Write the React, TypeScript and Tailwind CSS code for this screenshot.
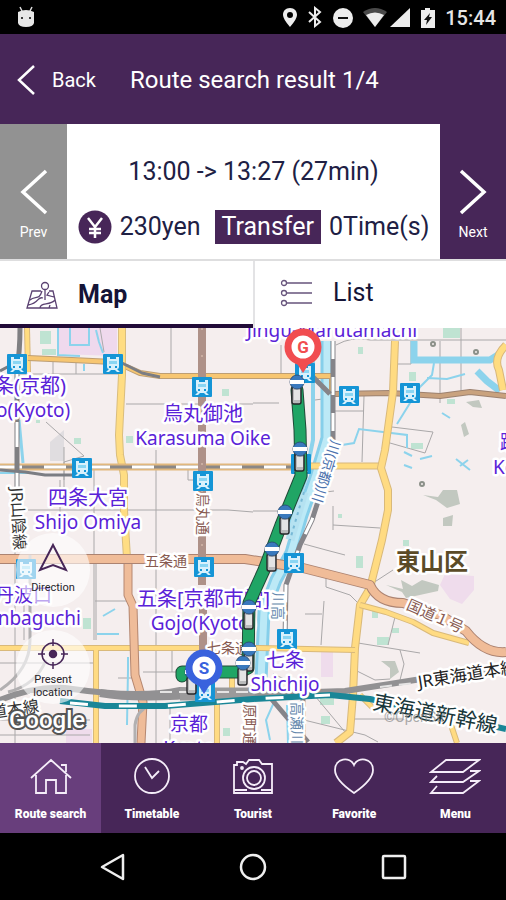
import React from "react";

const font = "font-[Roboto,'Noto_Sans',sans-serif]";

type P = { d: string; w: number; c: string; dash?: string; o?: number };

function Line({ d, w, c, dash, o }: P) {
  return (
    <path d={d} fill="none" stroke={c} strokeWidth={w} strokeDasharray={dash} opacity={o} strokeLinejoin="round" />
  );
}

function Road({ d, w, c, edge }: { d: string; w: number; c: string; edge: string }) {
  return (
    <g>
      <Line d={d} w={w} c={edge} />
      <Line d={d} w={w - 2} c={c} />
    </g>
  );
}

const streets = [
  "M171 328V373M53 358V374M76 363V374M20 374H118M126 404H253M253 403H279M156 450V743M64 447V500M94 470V640M28 510H228M228 510L253 512",
  "M46 422L84 456L64 462V480M188 470V480H203M95 601H128M0 663H93M118 678H135M143 672H180M172 650V672M96 640V560M24 600V640",
  "M281 345V374M336 345Q352 336 370 340H506M440 341V403M461 328V392M411 341V364H398",
  "M330 411H364M364 396L362 462M392 427L433 432L425 453L390 443M253 511H278M333 506V530M333 525L380 528",
  "M304 544L326 550L345 555M373 583L393 570M326 578V587L350 595L358 603M305 614H322M324 601L321 645",
  "M395 617L388 645M358 643L420 653M400 650L404 664L400 680M355 670L375 680L390 679M304 720L365 735L378 742M352 719H405M15 743V550M60 480V535",
  "M300 495L334 491M273 674L310 690L345 732M315 400L330 398M100 328L104 352M0 720H90M0 735H90M170 708V743",
];

const parks = [
  [40, 331, 11, 13], [42, 349, 14, 6], [222, 389, 7, 7], [126, 436, 7, 7], [74, 438, 7, 6], [443, 328, 17, 10], [409, 372, 7, 9],
  [358, 347, 5, 7], [447, 399, 8, 5], [356, 556, 7, 12], [83, 618, 8, 11], [411, 443, 12, 6], [377, 637, 12, 8], [392, 628, 7, 5],
  [223, 728, 7, 8], [320, 698, 14, 7], [321, 716, 9, 8], [372, 611, 6, 7], [403, 540, 6, 6], [338, 514, 4, 4], [36, 420, 4, 3],
];

const stations = [
  [17, 364], [113, 364], [202, 387], [82, 468], [203, 481], [305, 373], [349, 396], [410, 393],
  [301, 464], [294, 563], [204, 567], [26, 569], [287, 639], [205, 692],
];

const stops = [
  [297, 382], [300, 449], [285, 512], [272, 549], [249, 607], [249, 649], [243, 663],
];

function Station({ x, y }: { x: number; y: number }) {
  return (
    <g transform={`translate(${x} ${y})`}>
      <rect x="-10" y="-10" width="20" height="20" rx="1" fill="#1595d6" />
      <path d="M-6 -7H-3V-5H3V-7H6V3Q6 5 4 5L7 8H4L2 6H-2L-4 8H-7L-4 5Q-6 5 -6 3Z" fill="#d8f1fc" />
      <path d="M-4 -3H4V0H-4Z" fill="#8ad6f3" />
      <path d="M-4 2H-2V4H-4ZM2 2H4V4H2Z" fill="#1595d6" />
    </g>
  );
}

function Stop({ x, y }: { x: number; y: number }) {
  return (
    <g transform={`translate(${x} ${y})`}>
      <rect x="-5" y="5" width="9" height="17" rx="2" fill="#b9babb" stroke="#27272a" strokeWidth="1.4" />
      <path d="M-3 8H3V18H-3Z" fill="#e4e4e4" />
      <circle r="7" fill="#3979bd" stroke="#294669" strokeWidth="0.8" />
      <path d="M-7 -2H7V2H-7Z" fill="#fff" />
    </g>
  );
}

type LabelProps = { x: number; y: number; size?: number; fill?: string; rotate?: number; start?: boolean; bold?: boolean; children: string };

function Label({ x, y, size = 19, fill = "#5a22d8", rotate = 0, start, bold, children }: LabelProps) {
  return (
    <text
      x={x}
      y={y}
      fontSize={size}
      fill={fill}
      fontWeight={bold ? 700 : 400}
      textAnchor={start ? "start" : "middle"}
      transform={rotate ? `rotate(${rotate} ${x} ${y})` : undefined}
      stroke="#fff"
      strokeWidth="5"
      strokeLinejoin="round"
      className="[paint-order:stroke] font-['Noto_Sans','Noto_Sans_CJK_JP',sans-serif]"
    >
      {children}
    </text>
  );
}

function Pin({ x, y, color, children }: { x: number; y: number; color: string; children: string }) {
  return (
    <g transform={`translate(${x} ${y})`}>
      <path d="M-7 15L0 26L7 15Z" fill={color} />
      <circle r="15" fill="#fff" stroke={color} strokeWidth="7" />
      <text y="6" fontSize="17" fontWeight="700" fill={color} textAnchor="middle" className="font-[Roboto,sans-serif]">
        {children}
      </text>
    </g>
  );
}

function CityMap() {
  const river = "M327 341V438L315 478L302 515L291 553L276 580L264 612L261 680";
  const second = "M0 467H300";
  const route = "M297 390L300 430L301 476L281 525L264 570L249 603L248 668L240 672H182V676";
  return (
    <svg viewBox="0 328 506 415" preserveAspectRatio="xMidYMid slice" className="absolute inset-0 size-full" role="img" aria-label="Route map">
      <rect x="0" y="328" width="506" height="415" fill="#f5eeee" />
      <path d="M58 328H117V356L58 354Z" fill="#efd9ed" />
      <path d="M445 574L474 576V590L462 604L450 599L440 585ZM321 652H333V677H321ZM66 729H92V743H66Z" fill="#efdcec" />
      <path d="M50 442L64 430V461H50Z" fill="#e0dde0" />
      {parks.map(([x, y, w, h]) => (
        <rect key={`${x}-${y}`} x={x} y={y} width={w} height={h} fill="#bfe3d2" />
      ))}
      <path d="M423 495L438 497L443 490H457L460 504L447 508L436 500ZM443 518L453 515L452 526H443ZM386 585L403 589L401 580L412 586L422 580L439 585L438 591L406 598L402 592ZM381 661H395L399 672L390 679V668ZM461 425L465 422L469 434L464 437ZM466 402L479 400L482 408L473 407Z" fill="#c2c8c0" />
      <g fill="none" stroke="#8b9089" strokeWidth="2">
        <circle cx="476" cy="352" r="2" /><circle cx="422" cy="484" r="2" /><circle cx="433" cy="344" r="2" />
      </g>
      {streets.map((d) => <Line key={d} d={d} w={1} c="#aaa8a9" />)}

      <g fill="none" stroke="#8cd3ec">
        <path d="M58 328V355L80 356M70 328V345H89V328M96 330L99 342L103 353M84 364V371" strokeWidth="2" />
        <path d="M19 420L23 463" strokeWidth="3" />
        <path d="M414 341V360H490L498 355M477 371L487 381L500 391" strokeWidth="7" />
        <path d="M434 363L432 375L420 387L397 424M427 378L447 379L465 374M336 446L354 443L359 429L383 432L407 435V448M404 452L412 456M420 459L432 456M404 465L412 468M442 413L450 418M456 459L470 470M468 460L460 466" strokeWidth="2" />
        <path d="M128 657V670L127 725M103 616L115 609M97 634H119M275 700L266 720L270 740M287 705L288 743M0 473H30" strokeWidth="2" />
        <path d="M313 341V440L305 480L287 530" strokeWidth="4" />
      </g>
      <path d={river} fill="none" stroke="#86cfea" strokeWidth="13" />
      <path d={river} fill="none" stroke="#bce9f6" strokeWidth="7" />
      <Line d="M304 492L290 540" w={9} c="#b5e2f1" />
      <Line d="M304 492L290 540" w={2} c="#78b9d6" dash="3 4" />

      <Road d="M27 328L28 372" w={6} c="#ffdc80" edge="#d8b77b" />
      <Road d="M28 358L72 360L113 362Q128 367 140 373L160 376H332V394" w={6} c="#f7c671" edge="#bd9e73" />
      <Road d="M333 394L390 393L440 396L470 392L506 396" w={6} c="#c9a27e" edge="#9d8270" />
      <Road d="M506 345Q493 358 499 370L503 390" w={8} c="#ffdc80" edge="#d8b77b" />
      <Road d="M122 328V375L119 435L120 455L124 475V510L127 558" w={8} c="#ffdd83" edge="#d9bd7e" />
      <Line d={second} w={7} c="#e1b77d" />
      <Line d={second} w={3} c="#8a8786" />
      <Line d={second} w={3} c="#fff" dash="22 22" />
      <Road d="M302 466H385" w={7} c="#ffdc80" edge="#d8b77b" />
      <Road d="M395 341L393 392L385 450L381 468L388 490V510L382 540L370 588L360 605L355 648L353 695L350 732L336 743" w={8} c="#ffdb82" edge="#d9b97a" />
      <Road d="M360 605L386 612L413 622L433 633L469 643" w={6} c="#ffdb82" edge="#d9b97a" />
      <Road d="M0 648H260L355 650" w={6} c="#ffdb82" edge="#d9b97a" />
      <Road d="M96 650V743M217 700V743M232 676V690M360 695L375 710M451 725L457 743" w={6} c="#ffdb82" edge="#d9b97a" />
      <Road d="M128 560V595L133 606L135 675L143 702L141 743" w={9} c="#efbc99" edge="#b58770" />
      <Road d="M0 559H245L303 568L370 585Q378 603 403 603L440 615L466 631Q484 654 506 652" w={10} c="#f0bc98" edge="#ac8371" />
      <Line d="M202 328V585M203 605V650" w={8} c="#ae9188" />
      <Line d="M202 328V585" w={1} c="#e4c9b8" dash="2 25" />

      <Line d="M20 328Q20 350 17 370V494" w={5} c="#7f7f82" />
      <Line d="M17 372V494" w={3} c="#fff" dash="25 25" />
      <Line d="M0 371L15 363M122 363L142 373L160 377M0 470L25 472L45 475H82" w={3} c="#7b7d83" />
      <Line d="M333 341V455L312 520L300 545L286 585L285 640" w={5} c="#858489" />
      <Line d="M333 341V455L312 520L300 545L286 585L285 640" w={3} c="#fff" dash="18 18" />
      <Line d="M312 376L330 394M303 680V743M268 695L308 742" w={5} c="#858489" />
      <Line d="M30 555V640Q30 670 0 690M46 660Q36 685 8 692M135 743V725Q137 710 150 705" w={3} c="#b2b0b1" />
      <Line d="M0 700Q35 686 65 688Q140 699 180 690L253 694L345 691L390 684L415 680L506 668" w={6} c="#929193" />
      <Line d="M100 693Q140 700 210 693" w={8} c="#929193" />
      <Line d="M180 694H255" w={13} c="#9b9a9b" />
      <Line d="M160 692H252M30 694H72M380 687L440 680" w={2} c="#e5e4e4" dash="12 7" />
      <Line d="M60 701L105 706H165L253 699L330 695L370 699L440 714L506 729" w={6} c="#198697" />
      <Line d="M70 703L105 706H165L253 699L330 695" w={3} c="#fff" dash="18 31" />

      {stations.map(([x, y]) => <Station key={`${x}-${y}`} x={x} y={y} />)}

      <g>
        <Label x={332} y={337}>Jingu-Marutamachi</Label>
        <Label x={-6} y={393} size={20} start>条(京都)</Label>
        <Label x={-4} y={417} start>o(Kyoto)</Label>
        <Label x={203} y={421} size={20}>烏丸御池</Label>
        <Label x={203} y={445}>Karasuma Oike</Label>
        <Label x={88} y={505} size={20}>四条大宮</Label>
        <Label x={88} y={529}>Shijo Omiya</Label>
        <Label x={-5} y={602} size={19} start>丹波口</Label>
        <Label x={-13} y={625} start>anbaguchi</Label>
        <Label x={137} y={606} size={20} start>五条[京都市営]</Label>
        <Label x={203} y={630}>Gojo(Kyoto)</Label>
        <Label x={285} y={667} size={19}>七条</Label>
        <Label x={285} y={691}>Shichijo</Label>
        <Label x={189} y={731} size={19}>京都</Label>
        <Label x={189} y={755}>Kyoto</Label>
        <Label x={500} y={449} start>蹴上</Label>
        <Label x={493} y={474} start>Keage</Label>
        <Label x={166} y={566} size={14} fill="#885b52">五条通</Label>
        <Label x={228} y={653} size={14} fill="#885b52">七条通</Label>
        <Label x={198} y={493} size={14} fill="#885b52" rotate={90} start>烏丸通</Label>
        <Label x={245} y={704} size={14} fill="#885b52" rotate={90} start>原町通</Label>
        <Label x={331} y={439} size={14} fill="#4c72ad" rotate={107} start>川(京都)川</Label>
        <Label x={273} y={592} size={14} fill="#6387ac" rotate={90} start>川高</Label>
        <Label x={292} y={702} size={14} fill="#6387ac" rotate={90} start>高瀬川</Label>
        <Label x={11} y={488} size={16} fill="#333" rotate={87} start>JR山陰線</Label>
        <Label x={433} y={621} size={15} fill="#885b52" rotate={24}>国道１号</Label>
        <Label x={432} y={570} size={24} fill="#5b4b27" bold>東山区</Label>
        <Label x={419} y={688} size={17} fill="#222" rotate={-9} start>JR東海道本線</Label>
        <Label x={372} y={709} size={21} fill="#17363a" rotate={11} start>東海道新幹線</Label>
        <text x="384" y="722" fontSize="14" fill="#8b8b8b" className="font-[Roboto,sans-serif]" opacity="0.7">©OpenStr</text>
        <Label x={-8} y={718} size={16} fill="#333" rotate={-8} start>道本線</Label>
      </g>

      <g fill="none" strokeLinecap="round" strokeLinejoin="round">
        <path d={route} stroke="#204a38" strokeWidth="13" />
        <path d={route} stroke="#20a565" strokeWidth="11" />
      </g>
      <Stop x={192} y={672} />
      {stops.map(([x, y]) => <Stop key={`${x}-${y}`} x={x} y={y} />)}
      <Pin x={303} y={347} color="#f14d50">G</Pin>
      <Pin x={204} y={668} color="#3962dd">S</Pin>
    </svg>
  );
}

function StatusIcons() {
  return (
    <svg viewBox="0 0 156 22" className="h-[22px] w-[156px]" fill="#ededed" aria-hidden="true">
      <path fillRule="evenodd" d="M7 2C2.500 2 0 5 0 9Q0 13 7 21Q14 13 14 9C14 5 11.500 2 7 2ZM7 6A3 3 0 1 1 7 12A3 3 0 0 1 7 6Z" />
      <path d="M26 6L37 16L32 20V2L37 6L26 16" fill="none" stroke="#ededed" strokeWidth="2" />
      <circle cx="60" cy="12" r="10" /><path d="M55 11H65V13H55Z" fill="#111" />
      <path d="M80 6Q92 -2 104 6L92 21Z" fill="#4a4a4a" /><path d="M83 9Q92 4 101 9L92 21Z" />
      <path d="M107 21L127 2V21Z" />
      <path d="M142 2H147V4H152V22H138V4H142Z" /><path d="M147 7L141 14H144L143 19L149 11H146Z" fill="#111" />
    </svg>
  );
}

function NavItem({ label, active, children }: { label: string; active?: boolean; children: React.ReactNode }) {
  return (
    <button type="button" className={`flex h-full flex-1 flex-col items-center pt-3 text-white ${active ? "bg-[#683e7c]" : ""}`}>
      <svg viewBox="0 0 52 40" className="h-10 w-[52px]" fill="none" stroke="#f5edf9" strokeWidth="1.8" aria-hidden="true">
        {children}
      </svg>
      <span className="mt-[11px] text-[12px] leading-4 font-black whitespace-nowrap">{label}</span>
    </button>
  );
}

export default function App() {
  return (
    <div className={`flex h-screen min-h-[720px] flex-col bg-black ${font}`}>
      <div className="flex h-[34px] shrink-0 items-center justify-between bg-black pr-[10px] pl-[17px] text-white">
        <svg viewBox="0 0 18 22" className="h-[22px] w-[18px]" aria-hidden="true">
          <path d="M3 1L5 5M15 1L13 5" stroke="#ddd" strokeWidth="1.500" />
          <path d="M1 6Q9 2 17 6V17Q16 21 9 21Q2 21 1 17Z" fill="#e7e7e7" />
          <circle cx="5" cy="12" r="1" /><circle cx="13" cy="12" r="1" />
        </svg>
        <div className="flex items-center gap-[6px]">
          <StatusIcons />
          <span className="pt-[2px] text-[20px] leading-6 font-medium text-[#e5e5e5]">15:44</span>
        </div>
      </div>

      <header className="flex h-[90px] shrink-0 items-center bg-[#472658] pt-[2px] pl-4 text-white">
        <button type="button" className="flex items-center gap-4 text-[20px] leading-8">
          <svg viewBox="0 0 20 32" className="h-8 w-5" fill="none" stroke="currentColor" strokeWidth="2.500" aria-hidden="true">
            <path d="M18 2L3 16L18 30" />
          </svg>
          Back
        </button>
        <h1 className="ml-[34px] text-[24px] leading-8">Route search result 1/4</h1>
      </header>

      <section className="flex h-[135px] shrink-0 bg-white">
        <button type="button" className="flex w-[67px] shrink-0 flex-col items-center bg-[#929292] pt-11 text-[14px] leading-5 text-white">
          <svg viewBox="0 0 28 48" className="h-12 w-7" fill="none" stroke="currentColor" strokeWidth="3.500" aria-hidden="true">
            <path d="M26 3L3 24L26 45" />
          </svg>
          <span className="mt-[6px]">Prev</span>
        </button>
        <div className="flex min-w-0 flex-1 flex-col items-center pt-8 text-[25px] text-[#202044]">
          <p className="leading-8 whitespace-nowrap">13:00 -&gt; 13:27 (27min)</p>
          <div className="mt-[22px] flex items-center whitespace-nowrap">
            <svg viewBox="0 0 34 34" className="size-[34px]" aria-hidden="true">
              <circle cx="17" cy="17" r="16.500" fill="#472658" />
              <path d="M10 8L17 17L24 8M17 17V28M11 19H23M11 23H23" stroke="#fff" strokeWidth="2.500" fill="none" />
            </svg>
            <span className="ml-2 leading-8">230yen</span>
            <span className="ml-[14px] bg-[#472658] px-[7px] leading-[34px] text-white">Transfer</span>
            <span className="ml-2 leading-8">0Time(s)</span>
          </div>
        </div>
        <button type="button" className="flex w-[66px] shrink-0 flex-col items-center bg-[#472658] pt-11 text-[14px] leading-5 text-white">
          <svg viewBox="0 0 28 48" className="h-12 w-7" fill="none" stroke="currentColor" strokeWidth="3.500" aria-hidden="true">
            <path d="M2 3L25 24L2 45" />
          </svg>
          <span className="mt-[6px]">Next</span>
        </button>
      </section>

      <div role="tablist" className="flex h-[69px] shrink-0 border-t-2 border-[#dededf] bg-white text-[25px] text-[#151437]">
        <button type="button" role="tab" aria-selected="true" className="flex flex-1 items-center gap-5 border-b-4 border-[#210b38] pt-1 pl-[26px] font-bold">
          <svg viewBox="0 0 32 30" className="h-[30px] w-8" fill="none" stroke="#5b4272" strokeWidth="1.300" aria-hidden="true">
            <circle cx="19" cy="6" r="3.500" />
            <path d="M19 10V20M15 11H6L1 28H31L27 11H23M4 20C9 15 13 21 16 11M2 25C14 23 11 16 17 18M23 12L21 15L28 17M14 28C14 22 24 26 29 20M23 28L24 25" />
          </svg>
          Map
        </button>
        <button type="button" role="tab" aria-selected="false" className="flex flex-1 items-center gap-5 border-l-2 border-[#e3e3e5] pb-1 pl-6">
          <svg viewBox="0 0 34 28" className="h-7 w-[34px]" fill="none" stroke="#67547c" strokeWidth="1.300" aria-hidden="true">
            <circle cx="5" cy="4" r="2.500" /><circle cx="5" cy="14" r="2.500" /><circle cx="5" cy="24" r="2.500" />
            <path d="M8 4H33M8 14H33M8 24H33" />
          </svg>
          List
        </button>
      </div>

      <main className="relative min-h-0 flex-1 overflow-hidden">
        <CityMap />
        <button type="button" className="absolute top-[205px] left-4 flex h-[74px] w-[74px] flex-col items-center rounded-full bg-white/60 pt-2 text-[11px] leading-[14px] text-[#26242b]">
          <svg viewBox="0 0 30 32" className="h-8 w-[30px]" fill="none" stroke="#472658" strokeWidth="2" aria-hidden="true">
            <path d="M15 4L28 29L15 24L2 29Z" />
          </svg>
          <span className="mt-2">Direction</span>
        </button>
        <button type="button" className="absolute top-[302px] left-4 flex h-[74px] w-[74px] flex-col items-center rounded-full bg-white/60 pt-[9px] text-[11px] leading-[13px] text-[#26242b]">
          <svg viewBox="0 0 30 30" className="size-[30px] shrink-0" fill="none" stroke="#472658" strokeWidth="1.500" aria-hidden="true">
            <circle cx="15" cy="15" r="11" />
            <path d="M15 0V7M15 23V30M0 15H7M23 15H30" />
            <circle cx="15" cy="15" r="3.500" fill="#472658" />
          </svg>
          <span className="mt-1">Present<br />location</span>
        </button>
        <span className="absolute bottom-[7px] left-[9px] text-[24px] leading-8 font-medium text-white [-webkit-text-stroke:4px_#555] [paint-order:stroke]">Google</span>
      </main>

      <nav className="flex h-[90px] shrink-0 bg-[#472658]">
        <NavItem label="Route search" active>
          <path d="M6 23L26 5L46 23M11 20V38H21V25H31V38H41V20M36 10H41V17" />
        </NavItem>
        <NavItem label="Timetable">
          <circle cx="26" cy="21" r="17" /><path d="M19 12L26 23L33 16" />
        </NavItem>
        <NavItem label="Tourist">
          <path d="M7 38V10H10V7H16L19 9L22 5H32L35 9H45V38Z" />
          <circle cx="27" cy="23" r="11" /><circle cx="27" cy="23" r="7" />
          <circle cx="15" cy="13" r="1" fill="#fff" /><path d="M7 35H20M34 35H45" />
        </NavItem>
        <NavItem label="Favorite">
          <path d="M26 38Q7 25 7 15C7 3 22 1 26 10C30 1 45 3 45 15Q45 25 26 38Z" />
        </NavItem>
        <NavItem label="Menu">
          <path d="M17 5H50L34 17H2ZM8 21L2 27H34L50 16H41M8 31L2 38H34L50 26H41" />
        </NavItem>
      </nav>

      <div className="flex h-[67px] shrink-0 items-center bg-black px-[42px] text-[#efefef]">
        <button type="button" aria-label="Back" className="flex flex-1 justify-center">
          <svg viewBox="0 0 28 28" className="size-7" fill="none" stroke="currentColor" strokeWidth="2.500" strokeLinejoin="round"><path d="M25 2V26L4 14Z" /></svg>
        </button>
        <button type="button" aria-label="Home" className="flex flex-1 justify-center">
          <svg viewBox="0 0 28 28" className="size-7" fill="none" stroke="currentColor" strokeWidth="2.500"><circle cx="14" cy="14" r="12" /></svg>
        </button>
        <button type="button" aria-label="Recent apps" className="flex flex-1 justify-center">
          <svg viewBox="0 0 28 28" className="size-7" fill="none" stroke="currentColor" strokeWidth="2.500"><rect x="3" y="3" width="22" height="22" rx="1" /></svg>
        </button>
      </div>
    </div>
  );
}
